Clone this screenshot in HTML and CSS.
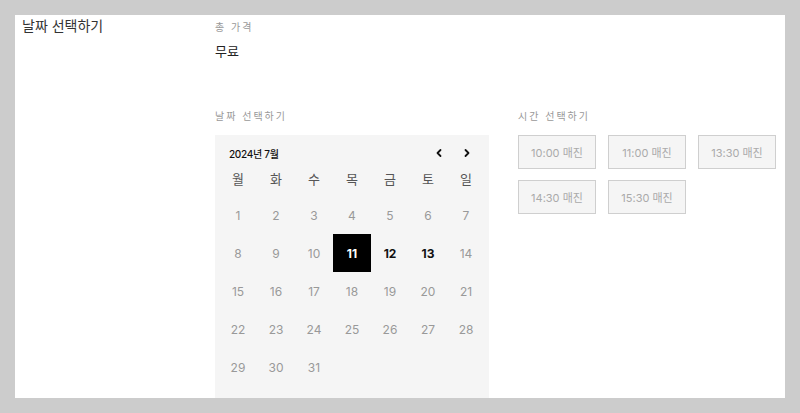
FILE: index.html
```html
<!DOCTYPE html>
<html lang="ko">
<head>
<meta charset="utf-8">
<link rel="stylesheet" href="styles.css">
</head>
<body>
<div class="panel">
  <div class="side">날짜 선택하기</div>
  <div class="main">
    <div class="price">
      <div class="label">총 가격</div>
      <div class="price-value">무료</div>
    </div>
    <div class="pickers">
      <div class="date-col">
        <div class="label">날짜 선택하기</div>
        <div class="calendar">
          <div class="cal-head">
            <span class="month">2024년 7월</span>
            <div class="nav">
              <svg width="10" height="10" viewBox="0 0 10 10"><path d="M6.5 2 L3.5 5 L6.5 8" fill="none" stroke="#111" stroke-width="1.8" stroke-linecap="round" stroke-linejoin="round"/></svg>
              <svg width="10" height="10" viewBox="0 0 10 10"><path d="M3.5 2 L6.5 5 L3.5 8" fill="none" stroke="#111" stroke-width="1.8" stroke-linecap="round" stroke-linejoin="round"/></svg>
            </div>
          </div>
          <div class="grid">
            <div class="wd">월</div><div class="wd">화</div><div class="wd">수</div><div class="wd">목</div><div class="wd">금</div><div class="wd">토</div><div class="wd">일</div>
            <div class="d">1</div><div class="d">2</div><div class="d">3</div><div class="d">4</div><div class="d">5</div><div class="d">6</div><div class="d">7</div>
            <div class="d">8</div><div class="d">9</div><div class="d">10</div><div class="d sel">11</div><div class="d on">12</div><div class="d on">13</div><div class="d">14</div>
            <div class="d">15</div><div class="d">16</div><div class="d">17</div><div class="d">18</div><div class="d">19</div><div class="d">20</div><div class="d">21</div>
            <div class="d">22</div><div class="d">23</div><div class="d">24</div><div class="d">25</div><div class="d">26</div><div class="d">27</div><div class="d">28</div>
            <div class="d">29</div><div class="d">30</div><div class="d">31</div>
          </div>
        </div>
      </div>
      <div class="time-col">
        <div class="label">시간 선택하기</div>
        <div class="slots">
          <div class="slot">10:00 매진</div>
          <div class="slot">11:00 매진</div>
          <div class="slot">13:30 매진</div>
          <div class="slot">14:30 매진</div>
          <div class="slot">15:30 매진</div>
        </div>
      </div>
    </div>
  </div>
</div>
</body>
</html>
```
FILE: styles.css
```css
html, body {
  margin: 0;
  padding: 0;
}
body {
  background: #cccccc;
  padding: 15px;
  height: 413px;
  box-sizing: border-box;
  font-family: "Inter", "Noto Sans CJK KR", sans-serif;
  color: #222;
}
.panel {
  background: #fff;
  height: 383px;
  overflow: hidden;
  display: flex;
}
.side {
  width: 200px;
  flex: none;
  box-sizing: border-box;
  padding: 1px 0 0 7px;
  font-size: 14px;
  line-height: 20px;
  color: #333;
}
.main {
  flex: 1;
  display: flex;
  flex-direction: column;
}
.label {
  font-size: 10px;
  line-height: 14px;
  color: #999;
  letter-spacing: 2px;
}
.price {
  padding-top: 5px;
  height: 89px;
}
.price-value {
  margin-top: 8px;
  font-size: 13px;
  line-height: 18px;
  color: #222;
}
.pickers {
  display: flex;
  gap: 29px;
}
.date-col .label, .time-col .label {
  margin-bottom: 12px;
}
.calendar {
  width: 274px;
  background: #f5f5f5;
  padding: 8px 4px 12px;
  box-sizing: border-box;
}
.cal-head {
  display: flex;
  align-items: center;
  justify-content: space-between;
  height: 20px;
  padding: 0 13px 0 10px;
}
.month {
  font-size: 10px;
  font-weight: 500;
  color: #111;
  letter-spacing: -0.3px;
}
.nav {
  display: flex;
  gap: 18px;
}
.nav svg {
  display: block;
}
.grid {
  display: grid;
  grid-template-columns: repeat(7, 38px);
  grid-auto-rows: 38px;
  grid-template-rows: 33px;
}
.wd {
  display: flex;
  align-items: center;
  justify-content: center;
  padding-bottom: 2px;
  font-size: 13px;
  color: #555;
}
.d {
  display: flex;
  align-items: center;
  justify-content: center;
  font-size: 12px;
  color: #999;
}
.d.on {
  color: #111;
  font-weight: 700;
}
.d.sel {
  background: #000;
  color: #fff;
  font-weight: 700;
}
.slots {
  display: grid;
  grid-template-columns: repeat(3, 78px);
  column-gap: 12px;
  row-gap: 11px;
}
.slot {
  height: 34px;
  box-sizing: border-box;
  border: 1px solid #cfcfcf;
  background: #f5f5f5;
  display: flex;
  align-items: center;
  justify-content: center;
  font-size: 11px;
  color: #aaa;
  white-space: nowrap;
}
```
